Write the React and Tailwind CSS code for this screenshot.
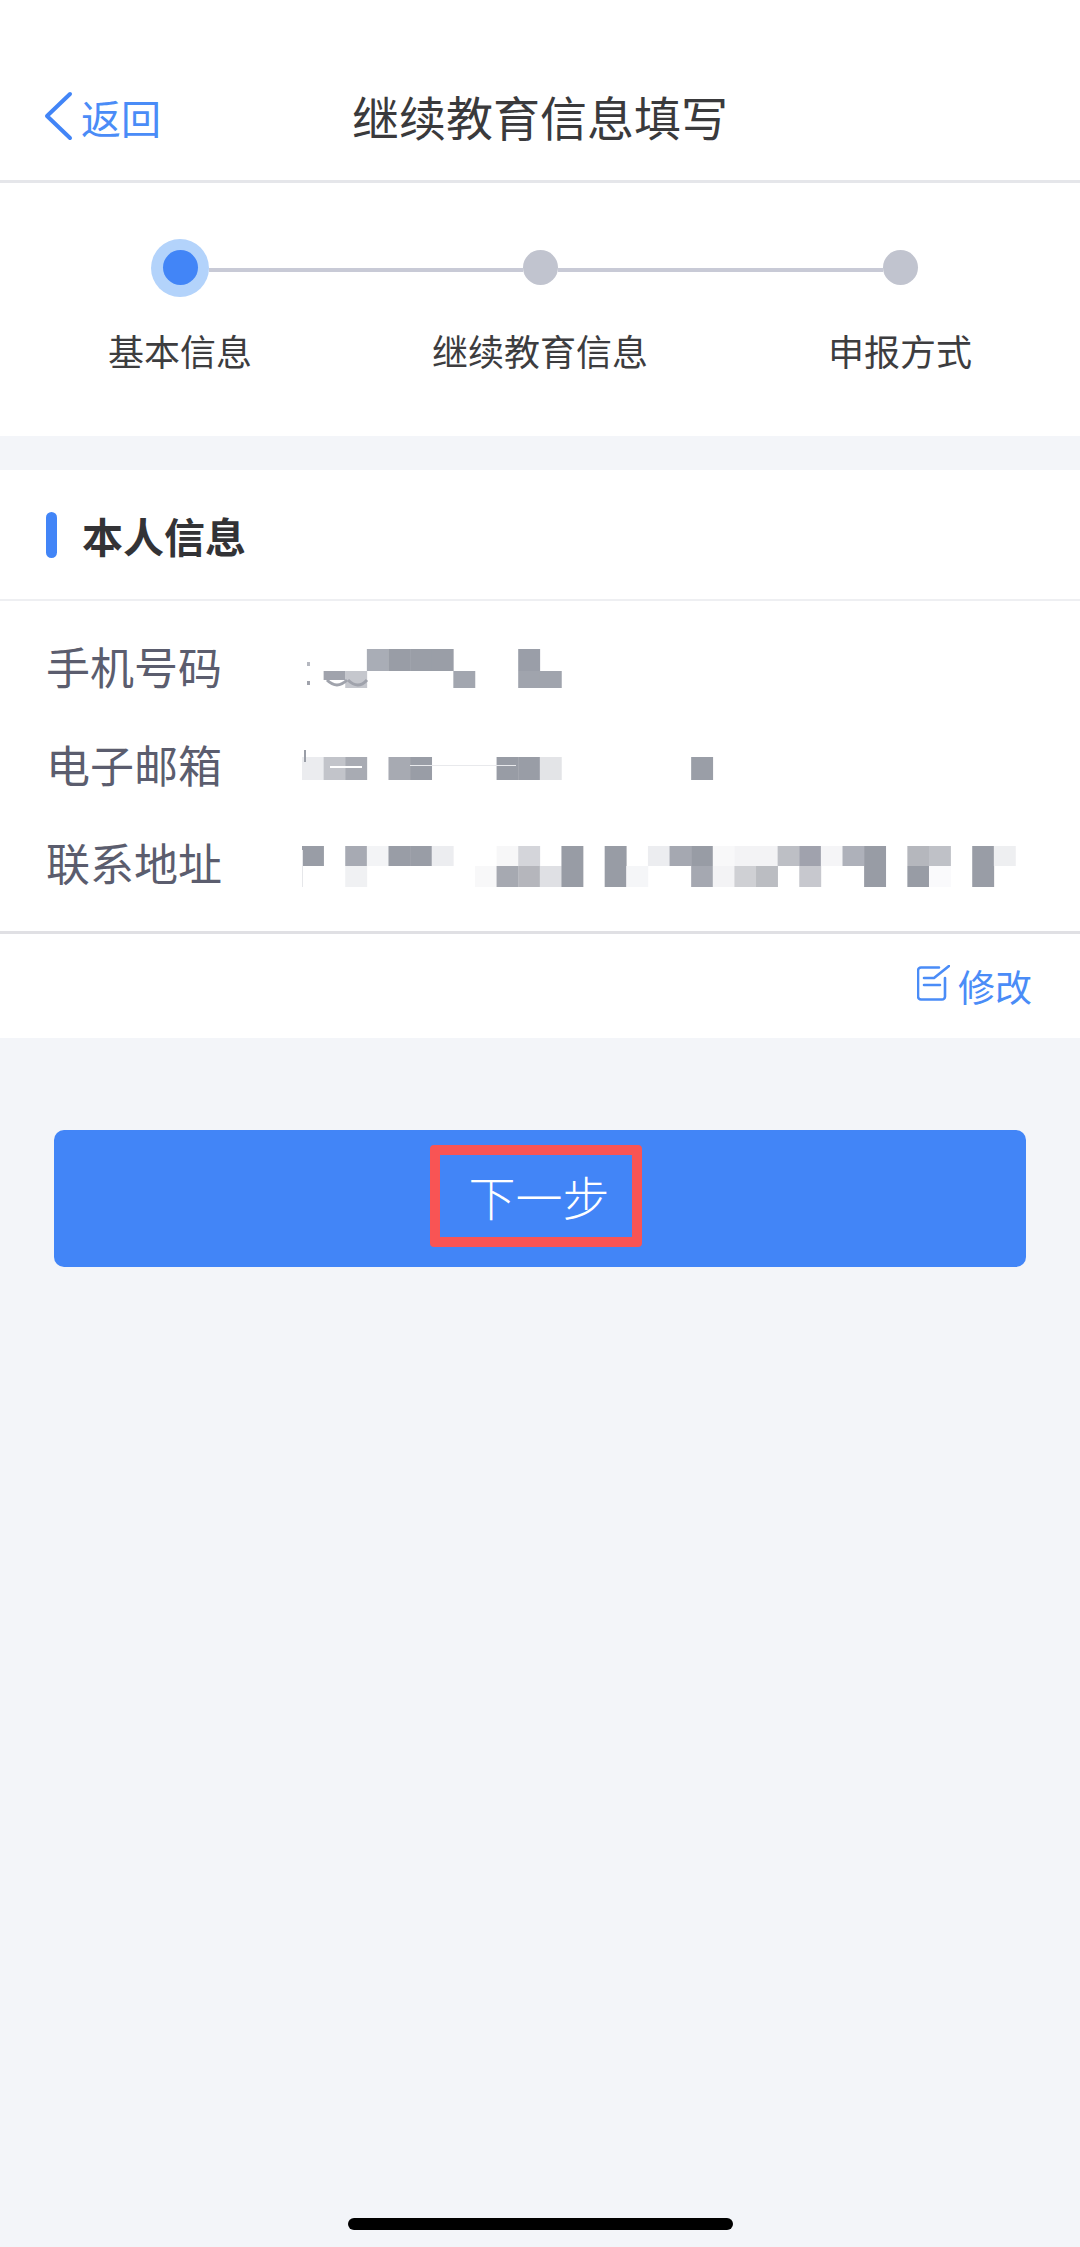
const row1Top = [[3,'#a9adb6'],[4,'#999da6'],[5,'#9a9ea7'],[6,'#9a9ea7'],[10,'#9a9ea8']];
const row1Bottom = [[2,'#c5c7cd'],[7,'#a2a6af'],[10,'#a0a4ad'],[11,'#a0a4ad']];
const row2 = [[0,'#ebecef'],[1,'#c2c4ca'],[2,'#a8abb3'],[4,'#a7aab2'],[5,'#999da6'],[9,'#989ca5'],[10,'#999da6'],[11,'#e3e4e7'],[18,'#9a9ea7']];
const row3Top = [[0,'#999da6'],[2,'#a7aab3'],[3,'#f3f4f6'],[4,'#999da6'],[5,'#999da6'],[6,'#ecedf0'],[9,'#f7f7f8'],[10,'#d4d5da'],[12,'#989ca5'],[14,'#989ca5'],[16,'#ecedf0'],[17,'#a5a8b1'],[18,'#989ca5'],[19,'#f8f8f9'],[20,'#f3f3f5'],[21,'#f3f3f5'],[22,'#bdbfc5'],[23,'#a0a2ad'],[24,'#f5f5f7'],[25,'#aeb1ba'],[26,'#989ca5'],[28,'#b5b7bd'],[29,'#bfc1c7'],[31,'#999da6'],[32,'#eeeff1']];
const row3Bottom = [[2,'#f0f1f3'],[8,'#f8f8f9'],[9,'#a6a9b1'],[10,'#b5b6bc'],[11,'#dfe0e4'],[12,'#989ca5'],[14,'#989ca5'],[15,'#f5f6f8'],[18,'#a5a8b1'],[19,'#f3f3f5'],[20,'#cfd0d4'],[21,'#bbbdc2'],[23,'#c7c8ce'],[26,'#989ca5'],[28,'#989ca5'],[29,'#fafafc'],[31,'#999da6']];

const CELL = 21.62;

function Band({ cells, y, h }) {
  return cells.map(([i, c]) => (
    <rect key={`${y}-${i}`} x={i * CELL} y={y} width={CELL + 0.3} height={h} fill={c} />
  ));
}

function InfoRow({ label, children }) {
  return (
    <div className="flex h-[98px] pl-[46px]">
      <div className="w-[256px] shrink-0 text-[44px] leading-[92px] text-[#5b5d6e]">{label}</div>
      <svg width="732" height="98" viewBox="0 0 732 98" className="block shrink-0">
        {children}
      </svg>
    </div>
  );
}

function Step({ label, active, left, right }) {
  return (
    <div className="flex flex-col items-center">
      <div className="grid h-[59px] w-full grid-cols-[1fr_auto_1fr] items-center">
        <div className={`mt-[4px] h-[4px] ${left ? 'bg-[#c8cad6]' : ''}`} />
        {active ? (
          <div className="flex h-[58px] w-[58px] items-center justify-center rounded-full bg-[#b3d3fb]">
            <div className="h-[35px] w-[35px] rounded-full bg-[#4285f7]" />
          </div>
        ) : (
          <div className="h-[35px] w-[35px] rounded-full bg-[#c1c4cf]" />
        )}
        <div className={`mt-[4px] h-[4px] ${right ? 'bg-[#c8cad6]' : ''}`} />
      </div>
      <div className="mb-[1px] mt-[28px] text-[36px] leading-[50px] text-[#3d3d3f]">{label}</div>
    </div>
  );
}

export default function App() {
  return (
    <div
      className="flex min-h-[2247px] w-[1080px] flex-col bg-[#f3f5f9]"
      style={{ fontFamily: '"Noto Sans CJK SC", "Liberation Sans", sans-serif' }}
    >
      <header className="grid h-[183px] grid-cols-[1fr_auto_1fr] items-center border-b-[3px] border-[#e5e6ea] bg-white pt-[52px]">
        <div className="flex items-center pl-[43px]">
          <svg width="30" height="50" viewBox="0 0 30 50" fill="none" className="block">
            <polyline points="27,3 4,25 27,47" stroke="#4285f7" strokeWidth="4" strokeLinecap="round" strokeLinejoin="round" />
          </svg>
          <span className="ml-[8px] mt-[2px] text-[40px] font-normal leading-[56px] text-[#4a8cf7]">返回</span>
        </div>
        <h1 className="text-[47px] font-normal leading-[64px] text-[#3a3a3c]">继续教育信息填写</h1>
        <div />
      </header>

      <section className="grid grid-cols-3 bg-white pb-[60px] pt-[55px]">
        <Step label="基本信息" active right />
        <Step label="继续教育信息" left right />
        <Step label="申报方式" left />
      </section>

      <section className="mt-[34px] bg-white">
        <div className="flex h-[131px] items-center border-b-2 border-[#eeeff2] pl-[46px]">
          <div className="h-[46px] w-[11px] rounded-full bg-[#4285f7]" />
          <div className="ml-[25px] text-[41px] font-bold leading-[56px] text-[#333336]">本人信息</div>
        </div>
        <div className="border-b-[3px] border-[#e0e0e4] pb-[17px] pt-[19px]">
          <InfoRow label="手机号码">
            <Band cells={row1Top} y={29} h={22} />
            <Band cells={[[1, '#a0a3ac']]} y={51} h={9} />
            <Band cells={row1Bottom} y={51} h={17} />
            <path d="M25 60 q10 10 20 0 M46 60 q10 10 19 0" stroke="#a0a3ac" strokeWidth="3" fill="none" />
            <rect x="5" y="42" width="3" height="4" fill="#b5b8c0" />
            <rect x="5" y="61" width="3" height="4" fill="#a0a3ac" />
          </InfoRow>
          <InfoRow label="电子邮箱">
            <Band cells={row2} y={39} h={23} />
            <rect x="28" y="48" width="32" height="2" fill="#ffffff" />
            <rect x="108" y="47" width="106" height="1" fill="#e8e9ec" />
            <rect x="2" y="32" width="2" height="12" fill="#9a9ea7" />
          </InfoRow>
          <InfoRow label="联系地址">
            <Band cells={row3Top} y={30} h={20} />
            <Band cells={row3Bottom} y={50} h={21} />
            <rect x="-1" y="34" width="2" height="37" fill="#e6e7ea" />
          </InfoRow>
        </div>
        <div className="flex h-[104px] items-center justify-end pr-[48px]">
          <svg width="33" height="36" viewBox="0 0 33 36" fill="none" className="mt-[-6px] block">
            <path d="M22 2.5H4a3 3 0 0 0-3 3v26a3 3 0 0 0 3 3h21a3 3 0 0 0 3-3V13" stroke="#4a8cf7" strokeWidth="2.6" strokeLinecap="round" />
            <path d="M7 13h10L32 1M7 20h16" stroke="#4a8cf7" strokeWidth="2.6" strokeLinecap="round" strokeLinejoin="round" />
          </svg>
          <span className="ml-[8px] text-[37px] font-normal leading-[52px] text-[#4a8cf7]">修改</span>
        </div>
      </section>

      <button className="mx-[54px] mt-[92px] flex h-[137px] items-center justify-center rounded-[10px] bg-[#4285f7]">
        <span className="mb-[5px] mr-[8px] flex h-[102px] w-[212px] items-center justify-center rounded-[4px] border-[10px] border-[#f95454] pl-[6px] text-[47px] font-light leading-[60px] text-white">
          下一步
        </span>
      </button>

      <div className="mb-[17px] mt-auto flex justify-center">
        <div className="h-[12px] w-[385px] rounded-full bg-black" />
      </div>
    </div>
  );
}
